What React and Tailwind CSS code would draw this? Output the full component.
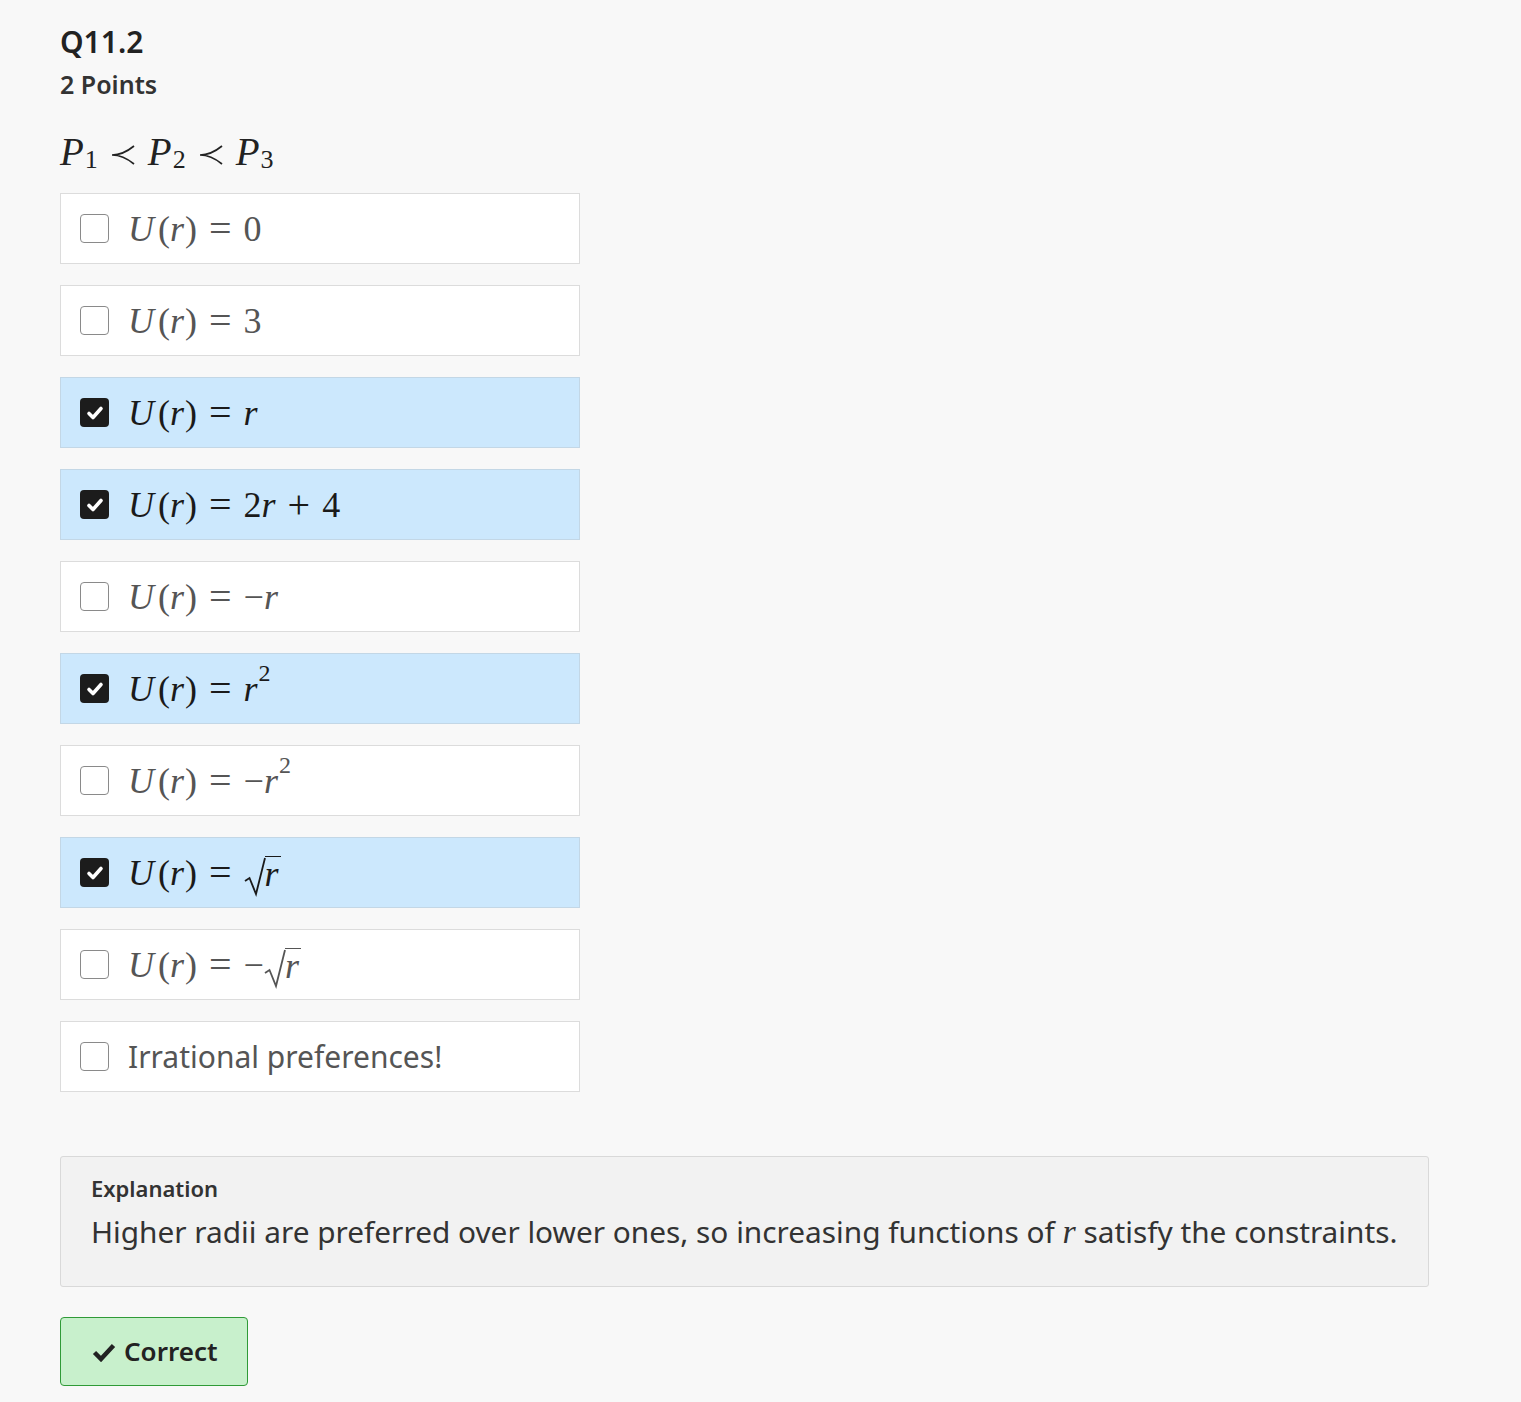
import React from 'react';

const serif = "font-['Liberation_Serif','DejaVu_Serif',serif]";

const V = ({ children }) => <span className="italic">{children}</span>;
const Op = ({ children }) => <span className="mx-[12px] text-[40px]">{children}</span>;

const Prec = () => (
  <svg width="26" height="22" viewBox="0 0 26 22" className="mx-[12px] mt-[6px]">
    <path d="M24 2 Q13 11 2 11 Q13 11 24 20" fill="none" stroke="currentColor" strokeWidth="1.7" />
  </svg>
);

const Sqrt = ({ children }) => (
  <span className="inline-flex items-end">
    <svg width="22" height="40" viewBox="0 0 22 40" className="-mr-[1px] mb-[-8px]">
      <path d="M1 24 L5.5 21 L12 37 L21 1" fill="none" stroke="currentColor" strokeWidth="1.8" />
    </svg>
    <span className="border-t-[1.8px] border-current pr-[2px] pt-[2px] leading-[30px]">{children}</span>
  </span>
);

const Ur = () => (
  <>
    <V>U</V>
    <span className="ml-[4px]">(</span>
    <V>r</V>
    <span className="ml-[1px]">)</span>
    <Op>=</Op>
  </>
);

const Sq = () => <sup className="text-[24px] ml-[1px] -top-[16px]">2</sup>;

const options = [
  { checked: false, body: <><Ur />0</> },
  { checked: false, body: <><Ur />3</> },
  { checked: true, body: <><Ur /><V>r</V></> },
  { checked: true, body: <><Ur />2<V>r</V><Op>+</Op>4</> },
  { checked: false, body: <><Ur />−<V>r</V></> },
  { checked: true, body: <><Ur /><V>r</V><Sq /></> },
  { checked: false, body: <><Ur />−<V>r</V><Sq /></> },
  { checked: true, body: <><Ur /><Sqrt><V>r</V></Sqrt></> },
  { checked: false, body: <><Ur />−<Sqrt><V>r</V></Sqrt></> },
];

function Box({ checked }) {
  if (checked) {
    return (
      <span className="flex h-[29px] w-[29px] shrink-0 items-center justify-center rounded-[4px] bg-[#1c1c1c]">
        <svg width="20" height="20" viewBox="0 0 20 20">
          <path d="M4 10.5 L8 14.5 L16 5.5" fill="none" stroke="white" strokeWidth="3.6" strokeLinecap="round" strokeLinejoin="round" />
        </svg>
      </span>
    );
  }
  return <span className="h-[29px] w-[29px] shrink-0 rounded-[4px] border-[1.5px] border-[#8a8a8a] bg-white" />;
}

function Option({ checked, children, text }) {
  return (
    <div
      className={`flex h-[71px] w-[520px] items-center gap-[19px] border-[1.5px] pl-[19px] ${
        checked ? 'border-[#c3d7e6] bg-[#cce8fd] text-[#1a1a1a]' : 'border-[#dcdcdc] bg-white text-[#555]'
      }`}
    >
      <Box checked={checked} />
      {text ? (
        <span className="text-[30px] text-[#555]">{children}</span>
      ) : (
        <span className={`${serif} flex items-center text-[36px] leading-none`}>{children}</span>
      )}
    </div>
  );
}

export default function App() {
  return (
    <div className="min-h-[1402px] bg-[#f8f8f8] px-[60px] pt-[23px] font-['Noto_Sans',sans-serif] text-[#2d2d2d]">
      <h2 className="text-[30px] font-semibold leading-[38px] text-[#222]">Q11.2</h2>
      <div className="mt-[8px] text-[25px] font-semibold leading-[30px] text-[#333]">2 Points</div>

      <div className={`${serif} mt-[31px] flex items-center text-[39px] leading-[44px] text-[#222]`}>
        <V>P</V><sub className="text-[26px] ml-[1px] top-[8px]">1</sub>
        <Prec />
        <V>P</V><sub className="text-[26px] ml-[1px] top-[8px]">2</sub>
        <Prec />
        <V>P</V><sub className="text-[26px] ml-[1px] top-[8px]">3</sub>
      </div>

      <div className="mt-[19px] flex flex-col gap-[21px]">
        {options.map((o, i) => (
          <Option key={i} checked={o.checked}>{o.body}</Option>
        ))}
        <Option checked={false} text>Irrational preferences!</Option>
      </div>

      <div className="mt-[64px] w-[1369px] rounded-[3px] border-[1.5px] border-[#d9d9d9] bg-[#f2f2f2] px-[30px] pt-[16px] pb-[33px]">
        <div className="text-[22px] font-semibold leading-[30px] text-[#333]">Explanation</div>
        <p className="mt-[8px] whitespace-nowrap text-[29.8px] leading-[42px] text-[#333]">
          Higher radii are preferred over lower ones, so increasing functions of{' '}
          <span className={`${serif} italic text-[34px]`}>r</span> satisfy the constraints.
        </p>
      </div>

      <button className="mt-[30px] flex h-[69px] w-[188px] items-center gap-[8px] rounded-[4px] border-[1.5px] border-[#2f9a37] bg-[#c8f0cc] pl-[31px] text-[26px] font-semibold text-[#222]">
        <svg width="24" height="20" viewBox="0 0 24 20">
          <path d="M2.5 10.5 L9 17 L21.5 3.5" fill="none" stroke="#222" strokeWidth="4.5" strokeLinejoin="miter" />
        </svg>
        Correct
      </button>
    </div>
  );
}
